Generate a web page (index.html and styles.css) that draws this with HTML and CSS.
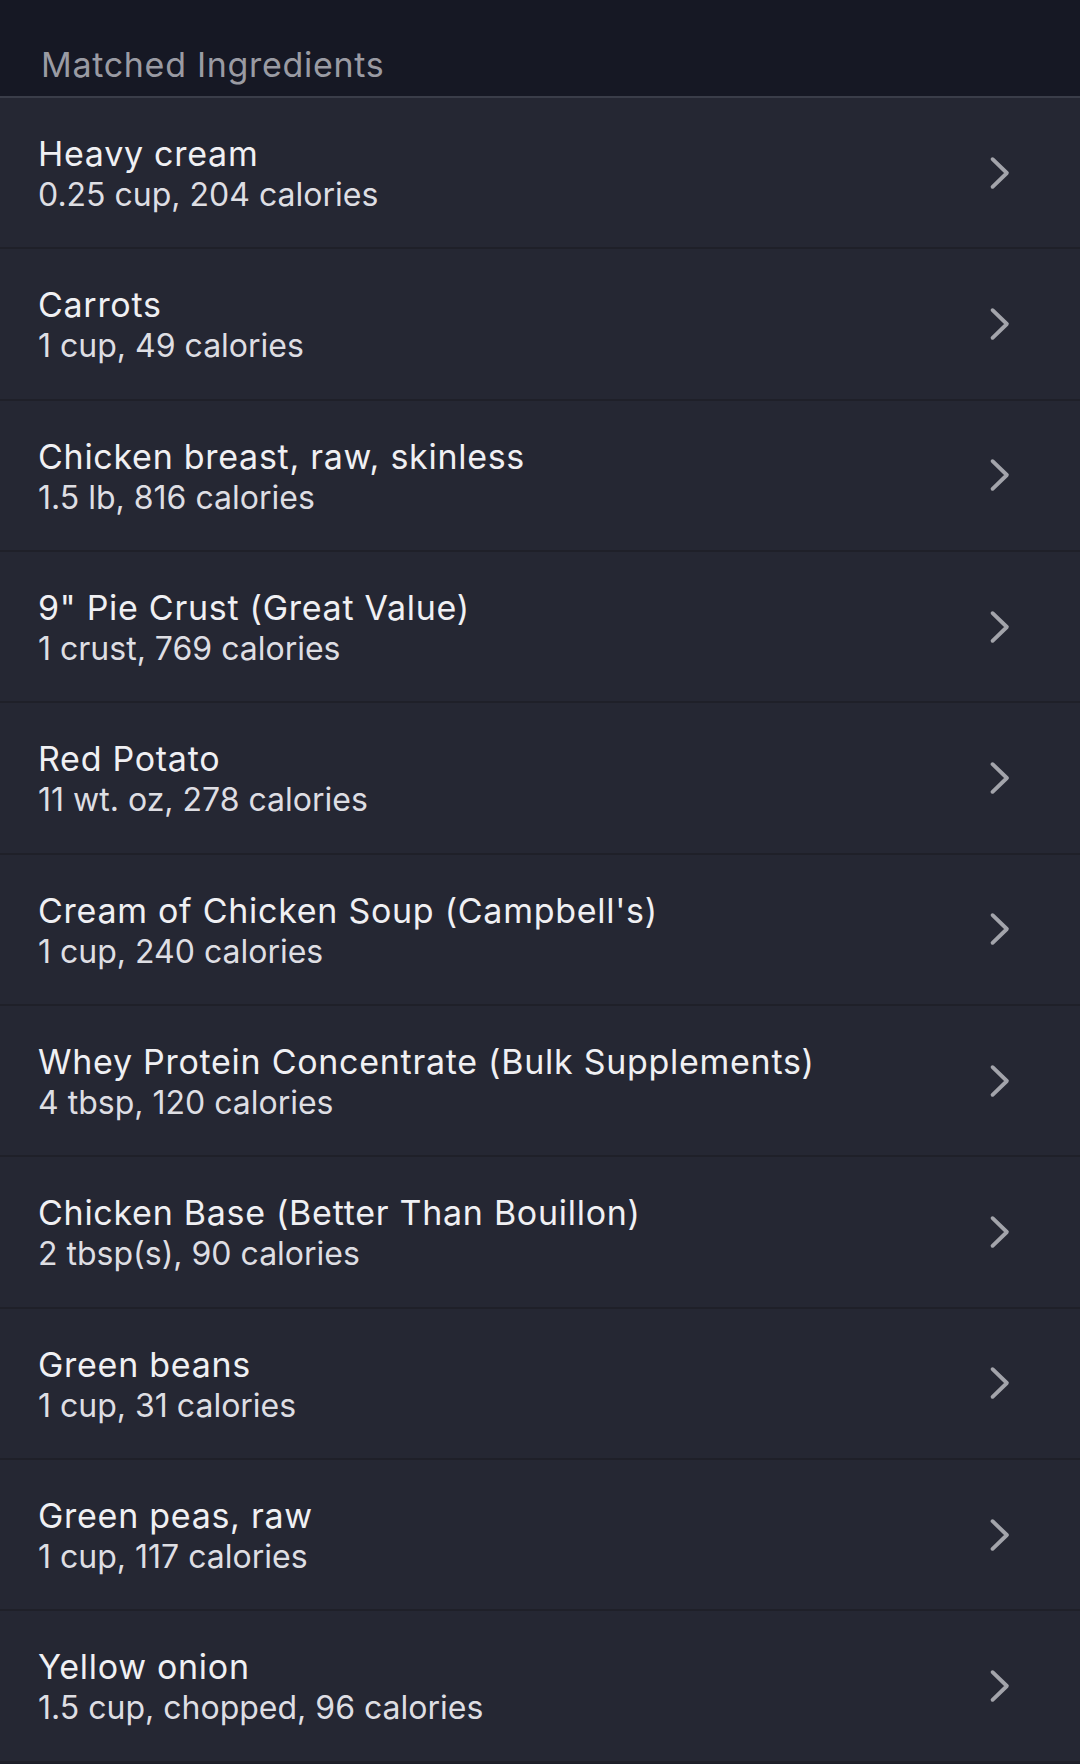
FILE: index.html
```html
<!DOCTYPE html>
<html>
<head>
<meta charset="utf-8">
<link rel="stylesheet" href="styles.css">
</head>
<body>
<div class="screen">
  <header class="header"><span class="header-title">Matched Ingredients</span></header>
  <ul class="list">
    <li class="row"><div class="text"><div class="name">Heavy cream</div><div class="detail">0.25 cup, 204 calories</div></div><svg class="chev" viewBox="0 0 20 32"><polyline points="3,3 16.5,16 3,29"/></svg></li>
    <li class="row"><div class="text"><div class="name">Carrots</div><div class="detail">1 cup, 49 calories</div></div><svg class="chev" viewBox="0 0 20 32"><polyline points="3,3 16.5,16 3,29"/></svg></li>
    <li class="row"><div class="text"><div class="name">Chicken breast, raw, skinless</div><div class="detail">1.5 lb, 816 calories</div></div><svg class="chev" viewBox="0 0 20 32"><polyline points="3,3 16.5,16 3,29"/></svg></li>
    <li class="row"><div class="text"><div class="name">9" Pie Crust (Great Value)</div><div class="detail">1 crust, 769 calories</div></div><svg class="chev" viewBox="0 0 20 32"><polyline points="3,3 16.5,16 3,29"/></svg></li>
    <li class="row"><div class="text"><div class="name">Red Potato</div><div class="detail">11 wt. oz, 278 calories</div></div><svg class="chev" viewBox="0 0 20 32"><polyline points="3,3 16.5,16 3,29"/></svg></li>
    <li class="row"><div class="text"><div class="name">Cream of Chicken Soup (Campbell's)</div><div class="detail">1 cup, 240 calories</div></div><svg class="chev" viewBox="0 0 20 32"><polyline points="3,3 16.5,16 3,29"/></svg></li>
    <li class="row"><div class="text"><div class="name">Whey Protein Concentrate (Bulk Supplements)</div><div class="detail">4 tbsp, 120 calories</div></div><svg class="chev" viewBox="0 0 20 32"><polyline points="3,3 16.5,16 3,29"/></svg></li>
    <li class="row"><div class="text"><div class="name">Chicken Base (Better Than Bouillon)</div><div class="detail">2 tbsp(s), 90 calories</div></div><svg class="chev" viewBox="0 0 20 32"><polyline points="3,3 16.5,16 3,29"/></svg></li>
    <li class="row"><div class="text"><div class="name">Green beans</div><div class="detail">1 cup, 31 calories</div></div><svg class="chev" viewBox="0 0 20 32"><polyline points="3,3 16.5,16 3,29"/></svg></li>
    <li class="row"><div class="text"><div class="name">Green peas, raw</div><div class="detail">1 cup, 117 calories</div></div><svg class="chev" viewBox="0 0 20 32"><polyline points="3,3 16.5,16 3,29"/></svg></li>
    <li class="row"><div class="text"><div class="name">Yellow onion</div><div class="detail">1.5 cup, chopped, 96 calories</div></div><svg class="chev" viewBox="0 0 20 32"><polyline points="3,3 16.5,16 3,29"/></svg></li>
  </ul>
</div>
</body>
</html>
```
FILE: styles.css
```css
html, body {
  margin: 0;
  padding: 0;
  background: #1c1e29;
}
.screen {
  width: 1080px;
  height: 1764px;
  overflow: hidden;
  font-family: Inter, "Liberation Sans", sans-serif;
  background: #1c1e29;
}
.header {
  box-sizing: border-box;
  background: #161824;
  border-bottom: 2px solid #3a3d49;
  height: 98px;
  padding-left: 41px;
  padding-top: 44px;
}
.header-title {
  display: block;
  font-size: 34px;
  line-height: 41px;
  color: #9a9ba3;
  letter-spacing: 0.7px;
}
.list {
  list-style: none;
  margin: 0;
  padding: 0;
}
.row {
  height: 151.33px;
  box-sizing: border-box;
  background: #252733;
  border-bottom: 2px solid #1f2029;
  display: flex;
  align-items: center;
  padding-left: 38px;
  padding-right: 69px;
}
.text {
  flex: 1;
  display: flex;
  flex-direction: column;
  margin-top: 3px;
}
.name {
  font-size: 34px;
  font-weight: 400;
  line-height: 41px;
  color: #f0f0f3;
  letter-spacing: 0.72px;
}
.detail {
  font-size: 32px;
  line-height: 41px;
  color: #dedee3;
}
.chev {
  width: 22px;
  height: 34px;
  fill: none;
  stroke: #a3a4ab;
  stroke-width: 3.6;
  stroke-linecap: round;
  stroke-linejoin: round;
}
```
